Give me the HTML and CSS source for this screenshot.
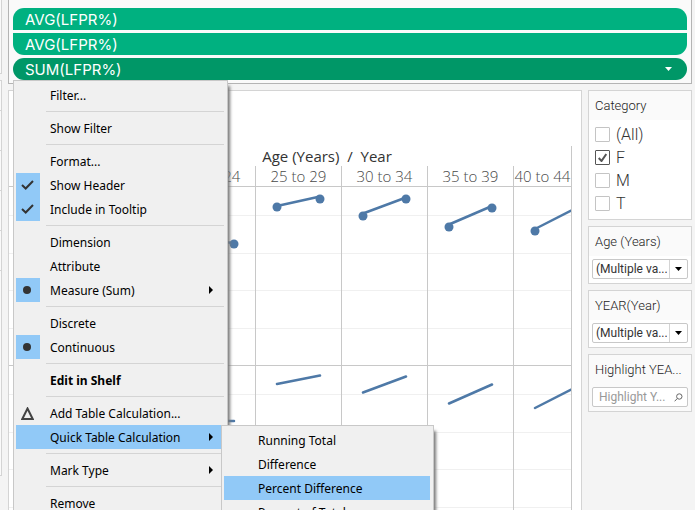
FILE: index.html
```html
<!DOCTYPE html>
<html lang="en">
<head>
<meta charset="utf-8">
<title>LFPR% by Age and Year</title>
<link rel="stylesheet" href="styles.css">
</head>
<body>
<div class="workspace">
  <aside class="rail">
    <div class="rail-box rail-top"></div>
    <div class="rail-box rail-marks"><i></i><i></i><i></i><i></i><i></i></div>
  </aside>
  <div class="main">
    <section class="shelf">
      <button class="pill pill-first">AVG(LFPR%)</button>
      <button class="pill pill-last">AVG(LFPR%)</button>
      <button class="pill pill-active">SUM(LFPR%)
        <svg width="7" height="4" viewBox="0 0 7 4"><path d="M0 0h7L3.500 4z" fill="#fff"/></svg>
      </button>
    </section>
    <div class="content">
      <section class="sheet">
        <div class="chart">
          <h2 class="chart-title">Age (Years)&nbsp; /&nbsp; Year</h2>
          <div class="columns">
            <span></span><span>20 to 24</span><span>25 to 29</span><span>30 to 34</span><span>35 to 39</span><span>40 to 44</span>
          </div>
          <svg class="plot" role="img" aria-label="LFPR% lines by age group">
            <g class="grid-light">
              <path d="M0 29.500H600M0 67.500H600M0 104.500H600M0 142.500H600M0 208.500H600M0 246.500H600M0 283.500H600M0 321.500H600"/>
            </g>
            <g class="grid-dark">
              <path d="M0 .5H600M0 179.500H600M246.500 0V400M332.500 0V400M418.500 0V400M504.500 0V400"/>
            </g>
            <g class="marks">
              <path d="M182 53L225 57M268 20L311 10.500M354 27.500L397 11.500M440 38.500L483 20M526 43L569 21"/>
              <path d="M182 235L225 235M268 198L311 189.500M354 206.500L397 190.500M440 217.500L483 198.500M526 222L569 200"/>
            </g>
            <g class="dots">
              <circle cx="225" cy="58" r="4.500"/><circle cx="268" cy="21" r="4.500"/><circle cx="311" cy="13" r="4.500"/>
              <circle cx="354" cy="30" r="4.500"/><circle cx="397" cy="13" r="4.500"/><circle cx="440" cy="41" r="4.500"/>
              <circle cx="483" cy="22" r="4.500"/><circle cx="526" cy="45" r="4.500"/>
            </g>
          </svg>
        </div>
      </section>
      <aside class="filters">
        <fieldset class="card">
          <legend class="card-title">Category</legend>
          <div class="checks">
            <label><input type="checkbox">(All)</label>
            <label><input type="checkbox" checked>F<svg class="tick" width="9" height="9" viewBox="0 0 9 9"><path d="M.7 5L3.500 8L8.300 1"/></svg></label>
            <label><input type="checkbox">M</label>
            <label><input type="checkbox">T</label>
          </div>
        </fieldset>
        <div class="card">
          <label class="card-title" for="age">Age (Years)</label>
          <div class="field">
            <select id="age"><option>(Multiple va...</option></select>
            <span class="drop"><svg width="7" height="4" viewBox="0 0 7 4"><path d="M0 0h7L3.500 4z"/></svg></span>
          </div>
        </div>
        <div class="card">
          <label class="card-title" for="year">YEAR(Year)</label>
          <div class="field">
            <select id="year"><option>(Multiple va...</option></select>
            <span class="drop"><svg width="7" height="4" viewBox="0 0 7 4"><path d="M0 0h7L3.500 4z"/></svg></span>
          </div>
        </div>
        <div class="card card-plain">
          <label class="card-title" for="hl">Highlight YEA...</label>
          <div class="field">
            <input id="hl" type="text" placeholder="Highlight Y...">
            <svg class="lens" width="9" height="9" viewBox="0 0 9 9"><circle cx="5.300" cy="3.500" r="2.700"/><path d="M3.300 5.500L.6 8.300"/></svg>
          </div>
        </div>
      </aside>
    </div>
  </div>
</div>

<div class="menu context" role="menu">
  <button>Filter...</button>
  <hr>
  <button>Show Filter</button>
  <hr>
  <button>Format...</button>
  <button><span class="mark"><svg width="13" height="10" viewBox="0 0 13 10"><path class="check" d="M1 5L4.700 8.500L12 1"/></svg></span>Show Header</button>
  <button><span class="mark"><svg width="13" height="10" viewBox="0 0 13 10"><path class="check" d="M1 5L4.700 8.500L12 1"/></svg></span>Include in Tooltip</button>
  <hr>
  <button>Dimension</button>
  <button>Attribute</button>
  <button><span class="mark"><svg width="8" height="8" viewBox="0 0 8 8"><circle cx="4" cy="4" r="4" fill="#333"/></svg></span>Measure (Sum)<svg class="arrow" width="4" height="8" viewBox="0 0 4 8"><path d="M0 0L4 4L0 8z"/></svg></button>
  <hr>
  <button>Discrete</button>
  <button><span class="mark"><svg width="8" height="8" viewBox="0 0 8 8"><circle cx="4" cy="4" r="4" fill="#333"/></svg></span>Continuous</button>
  <hr>
  <button class="strong">Edit in Shelf</button>
  <hr>
  <button><span class="mark plain"><svg width="13" height="13" viewBox="0 0 13 13"><path class="delta" d="M6.500 1.500L11.700 12H1.300z"/></svg></span>Add Table Calculation...</button>
  <button class="selected">Quick Table Calculation<svg class="arrow" width="4" height="8" viewBox="0 0 4 8"><path d="M0 0L4 4L0 8z"/></svg></button>
  <hr>
  <button>Mark Type<svg class="arrow" width="4" height="8" viewBox="0 0 4 8"><path d="M0 0L4 4L0 8z"/></svg></button>
  <hr>
  <button>Remove</button>
</div>

<div class="menu submenu" role="menu">
  <button>Running Total</button>
  <button>Difference</button>
  <button class="selected">Percent Difference</button>
  <button>Percent of Total</button>
</div>
</body>
</html>
```
FILE: styles.css
```css
* { box-sizing: border-box; }

body {
  margin: 0;
  height: 100vh;
  overflow: hidden;
  background: #f4f4f4;
  color: #333;
  font-family: "Open Sans", "Noto Sans", sans-serif;
}

button, input, select { font: inherit; color: inherit; }

.workspace {
  display: grid;
  grid-template-columns: 2px 1fr;
  column-gap: 6px;
  height: 100%;
  padding-right: 3px;
}

.rail {
  display: flex;
  flex-direction: column;
  gap: 6px;
}

.rail-box {
  border: 1px solid #d4d4d4;
  border-left: 0;
  background: #fafafa;
}

.rail-top { height: 74px; border-top: 0; }
.rail-marks { height: 396px; padding-top: 29px; }
.rail-marks i { display: block; height: 40px; border-top: 1px solid #d4d4d4; }

.main {
  display: flex;
  flex-direction: column;
  gap: 6px;
  min-width: 0;
}

.shelf {
  display: flex;
  flex-direction: column;
  gap: 3px;
  padding: 8px 4px 3px;
  border: 1px solid #b4b4b4;
  border-top: 0;
  background: #fafafa;
}

.pill {
  display: flex;
  align-items: center;
  justify-content: space-between;
  height: 22px;
  padding: 0 15px 0 12px;
  border: 0;
  background: #00b180;
  color: #fff;
  font-family: Inter, sans-serif;
  font-size: 15px;
}

.pill-first { border-radius: 11px 11px 0 0; }
.pill-last { border-radius: 0 0 11px 11px; }
.pill-active { border-radius: 11px; background: #009767; }

.content {
  display: grid;
  grid-template-columns: 1fr 104px;
  gap: 6px;
  flex: 1;
  min-height: 0;
}

.sheet {
  display: flex;
  min-width: 0;
  padding: 55px 9px 0 0;
  border: 1px solid #d4d4d4;
  border-bottom: 0;
  background: #fff;
}

.chart {
  display: flex;
  flex-direction: column;
  flex: 1;
  min-width: 0;
  border-right: 1px solid #c8c8c8;
}

.chart-title {
  margin: 0;
  padding-left: 74px;
  height: 20px;
  font-size: 15px;
  font-weight: 400;
  line-height: 20px;
  text-align: center;
}

.columns {
  display: flex;
  height: 20px;
  padding-left: 75px;
  overflow: hidden;
  color: #484848;
  font-size: 15px;
  font-weight: 300;
  line-height: 20px;
}

.columns span {
  flex: 0 0 86px;
  border-right: 1px solid #c8c8c8;
  text-align: center;
  white-space: nowrap;
}

.columns span:first-child { flex-basis: 86px; }
.columns span:last-child { flex: 1; border: 0; }

.plot { flex: 1; width: 100%; min-height: 0; }
.grid-light { stroke: #f0f0f0; }
.grid-dark { stroke: #c8c8c8; }
.marks { fill: none; stroke: #4e79a7; stroke-width: 2.500px; stroke-linecap: round; }
.dots { fill: #4e79a7; }

.filters {
  display: flex;
  flex-direction: column;
  gap: 6px;
  font-family: Roboto, sans-serif;
}

.card {
  min-width: 0;
  margin: 0;
  padding: 0;
  border: 1px solid #d4d4d4;
  background: #fff;
}

.card-title {
  display: block;
  float: left;
  width: 100%;
  height: 29px;
  padding: 0 6px;
  background: #fafafa;
  color: #222;
  font-size: 13px;
  font-weight: 300;
  line-height: 29px;
  white-space: nowrap;
}

.card-plain { background: #fafafa; }

.checks {
  clear: both;
  padding: 3px 6px 4px;
}

.checks label {
  display: flex;
  align-items: center;
  gap: 6px;
  position: relative;
  height: 23px;
  font-size: 16px;
  font-weight: 300;
}

.checks input {
  appearance: none;
  width: 15px;
  height: 15px;
  margin: 0;
  border: 1px solid #c4c4c4;
  border-radius: 1px;
  background: #fff;
}

.checks input:checked { border-color: #555; }

.tick {
  position: absolute;
  left: 3px;
  top: 7px;
  fill: none;
  stroke: #555;
  stroke-width: 2px;
}

.field {
  position: relative;
  clear: both;
  padding: 3px;
  height: 27px;
}

.field select, .field input {
  appearance: none;
  display: block;
  width: 100%;
  height: 20px;
  margin: 0;
  padding: 0 20px 0 3px;
  border: 1px solid #c8c8c8;
  border-radius: 2px;
  background: #fff;
  font-size: 12px;
  line-height: 18px;
}

.field input { padding-left: 6px; }
.field input::placeholder { color: #999; opacity: 1; }

.drop {
  position: absolute;
  top: 4px;
  right: 4px;
  display: grid;
  place-items: center;
  width: 18px;
  height: 18px;
  border-left: 1px solid #d4d4d4;
  pointer-events: none;
}

.lens {
  position: absolute;
  top: 9px;
  right: 8px;
  fill: none;
  stroke: #666;
}

.menu {
  position: absolute;
  padding: 2px 3px 2px 2px;
  border: 1px solid #c8c8c8;
  background: #f0f0f0;
  box-shadow: 3px 5px 3px -1px #777;
  color: #000;
  font-family: "Noto Sans", sans-serif;
  font-size: 12px;
}

.context { top: 80px; left: 13px; width: 215px; }
.submenu { top: 425px; left: 221px; width: 213px; }

.menu button {
  display: flex;
  align-items: center;
  position: relative;
  width: 100%;
  height: 24px;
  padding: 0 0 0 34px;
  border: 0;
  background: none;
  text-align: left;
  white-space: nowrap;
}

.menu hr {
  height: 1px;
  margin: 4px 0 4px 30px;
  border: 0;
  background: #d4d4d4;
}

.menu .selected { background: #91c9f7; }
.menu .strong { font-weight: 700; }

.mark {
  position: absolute;
  left: 0;
  top: 0;
  display: grid;
  place-items: center;
  width: 24px;
  height: 24px;
  padding-right: 2px;
  background: #91c9f7;
}

.plain { background: none; }
.check { fill: none; stroke: #333; stroke-width: 2px; }
.delta { fill: none; stroke: #444; stroke-width: 2px; }

.arrow {
  position: absolute;
  right: 11px;
  top: 8px;
}
```
